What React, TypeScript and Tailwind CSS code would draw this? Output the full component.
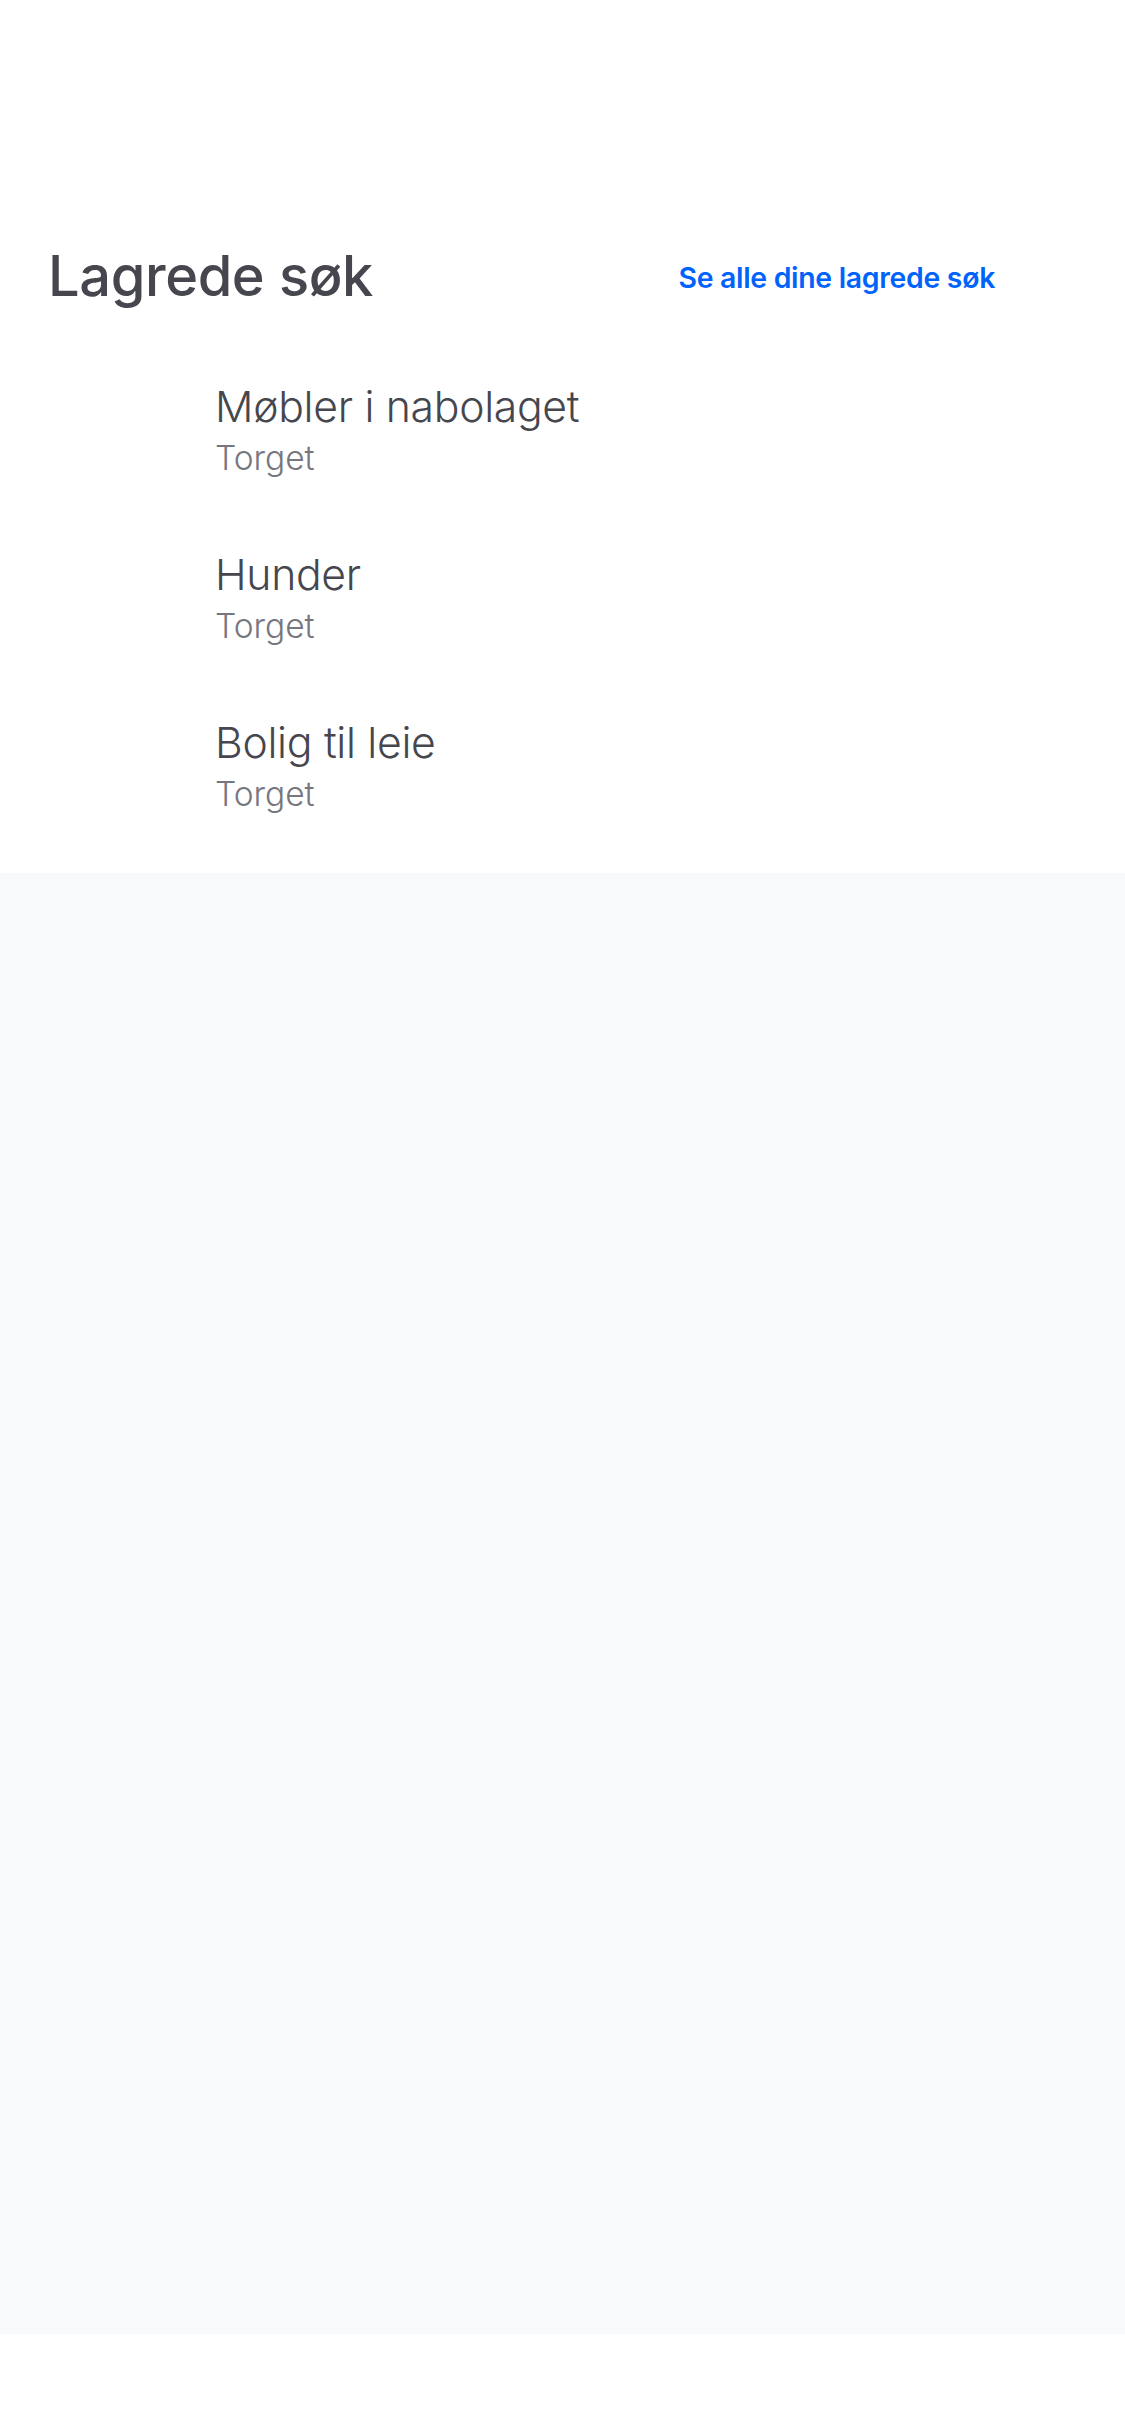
import React from "react";

const items = [
  { title: "Møbler i nabolaget", sub: "Torget" },
  { title: "Hunder", sub: "Torget" },
  { title: "Bolig til leie", sub: "Torget" },
];

export default function App() {
  return (
    <div
      className="w-[1125px] min-h-[2436px] bg-white flex flex-col"
      style={{ fontFamily: "Inter, 'Noto Sans', sans-serif" }}
    >
      <div className="bg-white pt-[243px] pb-[24px]">
        <div className="flex items-center justify-between pl-[48px] pr-[130px]">
          <h1 className="text-[56px] leading-[66px] font-medium text-[#46464e] tracking-[-0.4px]">
            Lagrede søk
          </h1>
          <a className="mt-[4px] text-[28.4px] leading-[34px] font-semibold text-[#0063fb] tracking-[-0.3px]">
            Se alle dine lagrede søk
          </a>
        </div>
        <div className="mt-[36px] flex flex-col">
          {items.map((it) => (
            <div key={it.title} className="flex py-[36px] pl-[215px]">
              <div className="flex flex-col gap-[6px]">
                <span className="text-[42.7px] leading-[52px] font-light text-[#46464e] tracking-[-0.3px]">
                  {it.title}
                </span>
                <span className="text-[33.5px] leading-[38px] font-light text-[#76767f]">
                  {it.sub}
                </span>
              </div>
            </div>
          ))}
        </div>
      </div>
      <div className="h-[1461px] bg-[#f8f9fb]" />
      <div className="h-[102px] bg-white" />
    </div>
  );
}
